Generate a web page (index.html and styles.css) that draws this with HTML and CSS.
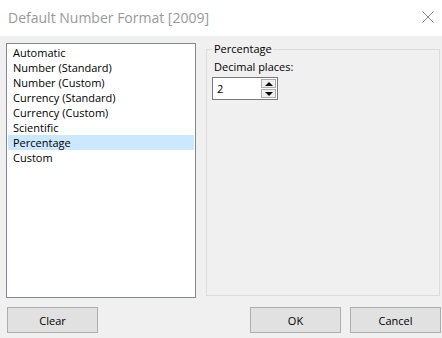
FILE: index.html
```html
<!DOCTYPE html>
<html lang="en">
<head>
    <meta charset="UTF-8">
    <title>Default Number Format [2009]</title>
    <link rel="stylesheet" href="styles.css">
</head>
<body>
    <div class="dialog">
        <!-- Title Bar -->
        <div class="titlebar">
            <span class="title">Default Number Format [2009]</span>
            <svg class="close" width="12" height="12" viewBox="0 0 12 12">
                <path d="M0.5 0.5 L11.5 11.5 M11.5 0.5 L0.5 11.5" stroke="#8a8a8a" stroke-width="1" fill="none"/>
            </svg>
        </div>

        <div class="content">
            <!-- Format List -->
            <ul class="format-list">
                <li>Automatic</li>
                <li>Number (Standard)</li>
                <li>Number (Custom)</li>
                <li>Currency (Standard)</li>
                <li>Currency (Custom)</li>
                <li>Scientific</li>
                <li class="selected">Percentage</li>
                <li>Custom</li>
            </ul>

            <!-- Options Group -->
            <fieldset class="group">
                <legend>Percentage</legend>
                <label class="field-label">Decimal places:</label>
                <div class="spin">
                    <span class="spin-value">2</span>
                    <div class="spin-buttons">
                        <div class="spin-btn"><span class="arrow-up"></span></div>
                        <div class="spin-btn"><span class="arrow-down"></span></div>
                    </div>
                </div>
            </fieldset>
        </div>

        <!-- Buttons -->
        <div class="footer">
            <button class="btn">Clear</button>
            <div class="footer-right">
                <button class="btn">OK</button>
                <button class="btn">Cancel</button>
            </div>
        </div>
    </div>
</body>
</html>
```

FILE: styles.css
```css
/* General Reset */
* {
    margin: 0;
    padding: 0;
    box-sizing: border-box;
}

body {
    width: 442px;
    height: 338px;
    background-color: #f0f0f0;
    font-family: 'Open Sans', 'Liberation Sans', sans-serif;
    font-size: 11px;
    color: #000;
}

.dialog {
    display: flex;
    flex-direction: column;
    height: 100%;
}

/* Title Bar */
.titlebar {
    height: 36px;
    background-color: #fff;
    display: flex;
    align-items: center;
    justify-content: space-between;
    padding: 0 8px 1px 8px;
}

.title {
    font-size: 14px;
    color: #999;
}

.close {
    display: block;
    margin-bottom: 2px;
}

/* Main Area */
.content {
    display: flex;
    padding: 7px 2px 0 6px;
    gap: 10px;
}

.format-list {
    list-style: none;
    width: 190px;
    height: 255px;
    background-color: #fff;
    border: 1px solid #828790;
    padding: 1px;
}

.format-list li {
    height: 15px;
    line-height: 15px;
    padding-left: 5px;
}

.format-list li.selected {
    background-color: #cce8ff;
}

/* Group Box */
.group {
    flex: 1;
    height: 254px;
    margin-top: -1px;
    border: 1px solid #dcdcdc;
    padding: 0 7px;
}

.group legend {
    padding: 0 1px;
    margin-left: -1px;
    line-height: 14px;
}

.field-label {
    display: block;
    margin-top: 3px;
    line-height: 15px;
}

.spin {
    display: flex;
    align-items: center;
    width: 66px;
    height: 23px;
    margin-top: 3px;
    margin-left: -2px;
    background-color: #fff;
    border: 1px solid #7a7a7a;
    padding: 1px;
}

.spin-value {
    flex: 1;
    padding-left: 3px;
}

.spin-buttons {
    display: flex;
    flex-direction: column;
    gap: 1px;
    width: 15px;
    height: 19px;
}

.spin-btn {
    flex: 1;
    background-color: #f0f0f0;
    border: 1px solid #adadad;
    display: flex;
    align-items: center;
    justify-content: center;
}

.arrow-up {
    border-left: 4px solid transparent;
    border-right: 4px solid transparent;
    border-bottom: 4px solid #000;
}

.arrow-down {
    border-left: 4px solid transparent;
    border-right: 4px solid transparent;
    border-top: 4px solid #000;
}

/* Footer Buttons */
.footer {
    display: flex;
    justify-content: space-between;
    padding: 9px 1px 0 7px;
}

.footer-right {
    display: flex;
    gap: 9px;
}

.btn {
    width: 91px;
    height: 26px;
    background-color: #e1e1e1;
    border: 1px solid #adadad;
    font-family: inherit;
    font-size: 11px;
    color: #000;
}
```
